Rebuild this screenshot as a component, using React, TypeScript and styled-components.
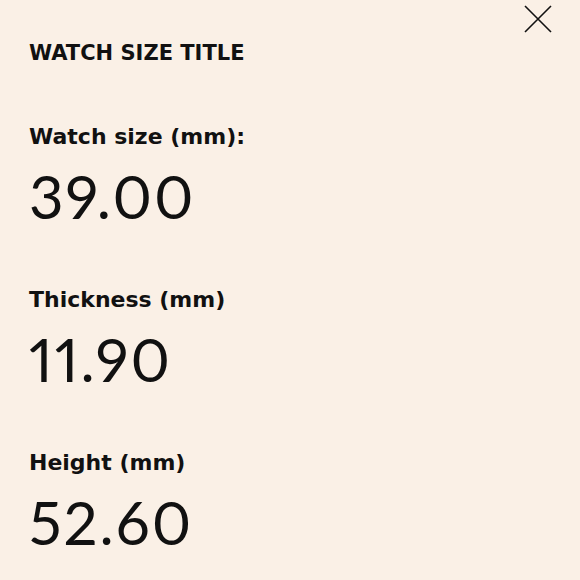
import styled, { createGlobalStyle } from "styled-components";

const GlobalStyle = createGlobalStyle`
    html, body {
        margin: 0;
        padding: 0;
        background: #faf0e6;
    }
    body {
        font-family: Lato, "Noto Sans", sans-serif;
        color: #111;
    }
`;

const Panel = styled.div`
    position: relative;
    width: 580px;
    height: 580px;
    box-sizing: border-box;
    padding: 40px 29px 0;
    display: flex;
    flex-direction: column;
`;

const CloseButton = styled.button`
    position: absolute;
    top: 4px;
    right: 27px;
    width: 30px;
    height: 30px;
    padding: 0;
    border: none;
    background: transparent;
    cursor: pointer;
    display: flex;
    align-items: center;
    justify-content: center;
`;

const Title = styled.h1`
    margin: 0;
    font-family: "DejaVu Sans", sans-serif;
    font-size: 21px;
    font-weight: 700;
    line-height: 26px;
    text-transform: uppercase;
`;

const List = styled.dl`
    margin: 57px 0 0;
    display: flex;
    flex-direction: column;
    gap: 55px;
`;

const Item = styled.div`
    display: flex;
    flex-direction: column;
    gap: 10px;
`;

const Label = styled.dt`
    font-family: "DejaVu Sans", sans-serif;
    font-size: 22px;
    font-weight: 700;
    line-height: 28px;
`;

const Value = styled.dd`
    margin: 0;
    font-size: 60px;
    font-weight: 400;
    line-height: 70px;
    letter-spacing: 2px;
    font-variant-numeric: proportional-nums;
`;

type Measure = {
    label: string;
    value: string;
};

const measures: Measure[] = [
    { label: "Watch size (mm):", value: "39.00" },
    { label: "Thickness (mm)", value: "11.90" },
    { label: "Height (mm)", value: "52.60" },
];

function App() {
    return (
        <>
            <GlobalStyle />
            <Panel>
                <CloseButton aria-label="Close">
                    <svg width="30" height="30" viewBox="0 0 30 30">
                        <path d="M2 2 L28 28 M28 2 L2 28" stroke="#111" strokeWidth="1.6" fill="none" />
                    </svg>
                </CloseButton>
                <Title>Watch size title</Title>
                <List>
                    {measures.map((m) => (
                        <Item key={m.label}>
                            <Label>{m.label}</Label>
                            <Value>{m.value}</Value>
                        </Item>
                    ))}
                </List>
            </Panel>
        </>
    );
}
export default App;
